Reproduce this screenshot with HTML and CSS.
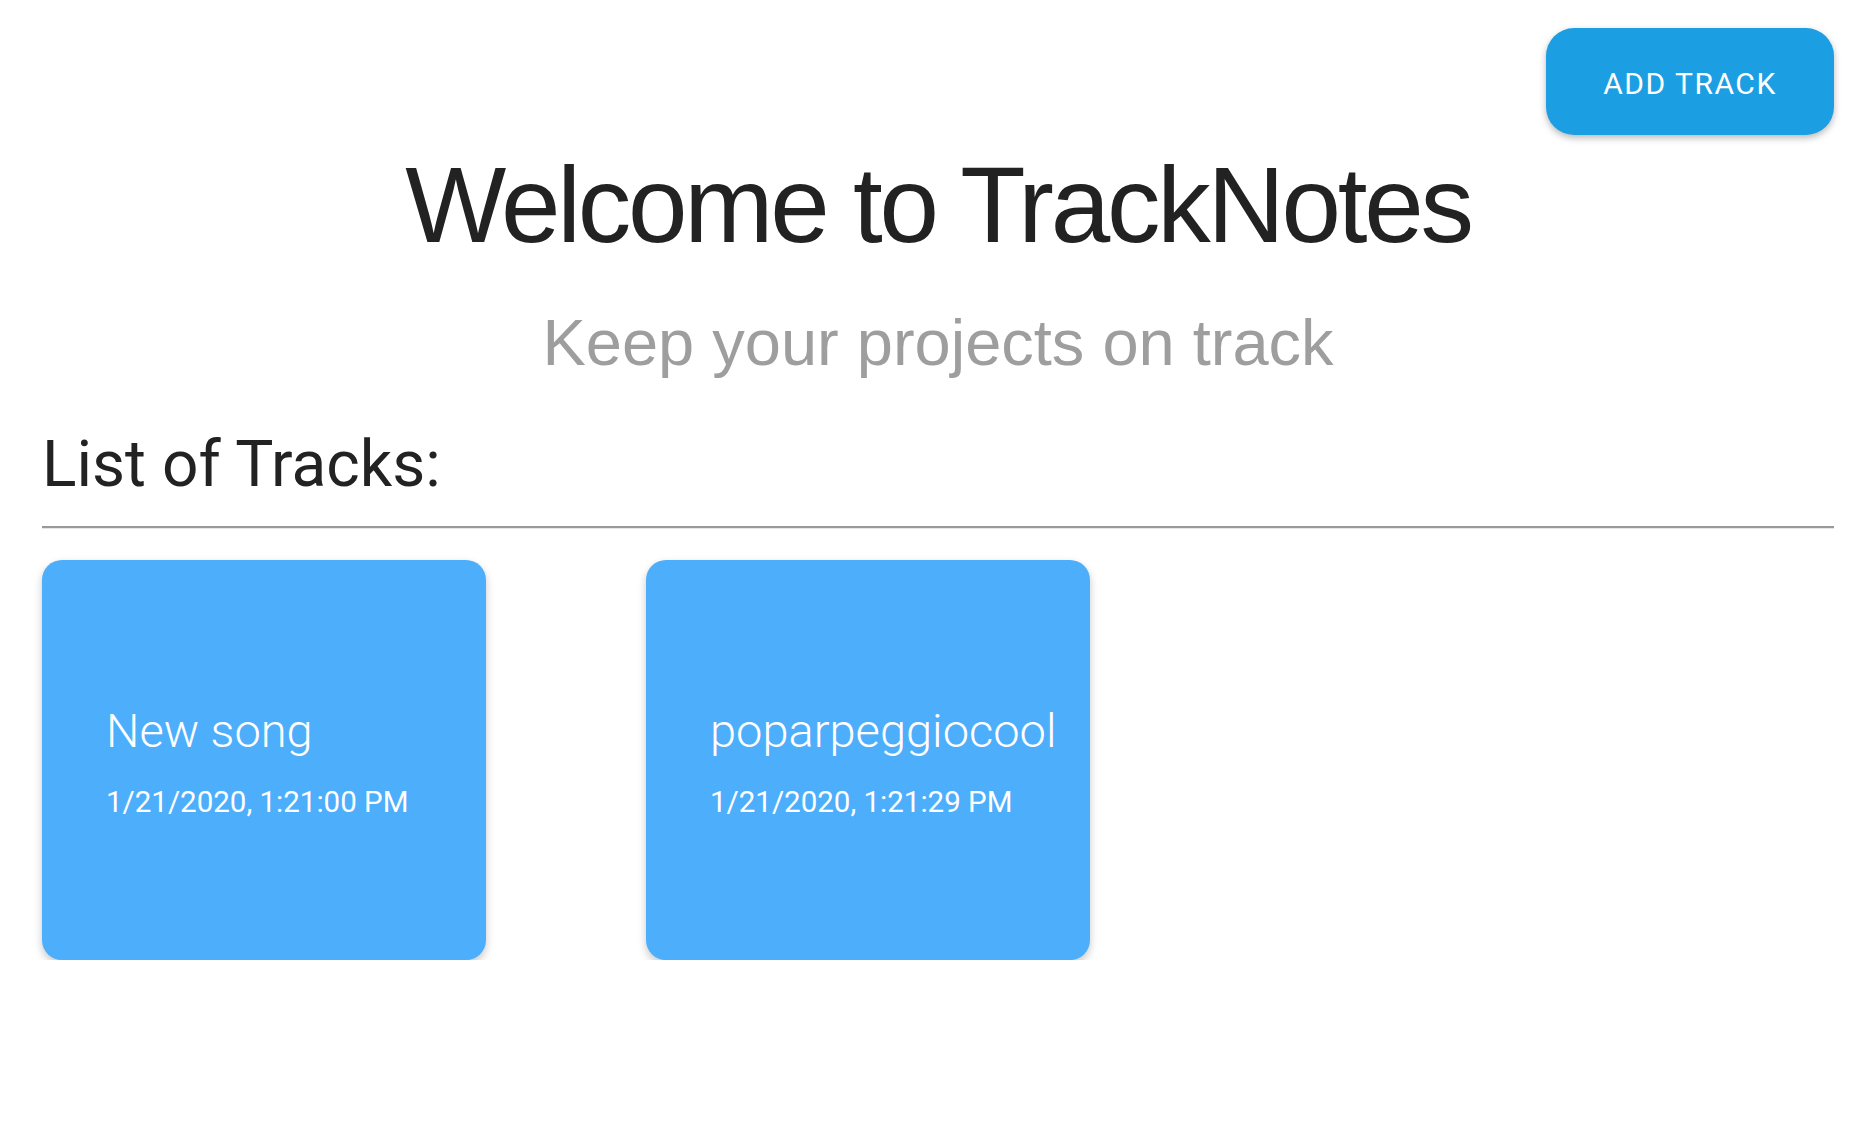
FILE: index.html
```html
<!DOCTYPE html>
<html lang="en">
<head>
<meta charset="utf-8">
<title>TrackNotes</title>
<link rel="stylesheet" href="styles.css">
</head>
<body>
<div class="page">
  <div class="topbar">
    <button class="add-btn">ADD TRACK</button>
  </div>
  <h1 class="title">Welcome to TrackNotes</h1>
  <p class="subtitle">Keep your projects on track</p>
  <h2 class="list-heading">List of Tracks:</h2>
  <hr class="divider">
  <div class="cards">
    <div class="card">
      <div class="card-title">New song</div>
      <div class="card-date">1/21/2020, 1:21:00 PM</div>
    </div>
    <div class="card">
      <div class="card-title">poparpeggiocool</div>
      <div class="card-date">1/21/2020, 1:21:29 PM</div>
    </div>
  </div>
</div>
</body>
</html>
```

FILE: styles.css
```css
html, body {
  margin: 0;
  padding: 0;
  background: #ffffff;
}

.page {
  padding: 0 36px 0 42px;
  font-family: Roboto, "Liberation Sans", sans-serif;
  color: #222222;
}

.topbar {
  display: flex;
  justify-content: flex-end;
  padding-top: 28px;
}

.add-btn {
  width: 288px;
  height: 107px;
  border: none;
  border-radius: 28px;
  background: #1c9ee2;
  color: #ffffff;
  font-family: Roboto, "Liberation Sans", sans-serif;
  font-size: 30px;
  font-weight: 400;
  letter-spacing: 1.5px;
  box-shadow: 0 3px 7px rgba(0, 0, 0, 0.28);
  cursor: pointer;
  padding: 4px 0 0 0;
}

.title {
  margin: 9px 0 0 0;
  text-align: center;
  font-family: "Liberation Sans", Arial, sans-serif;
  font-size: 107px;
  font-weight: 400;
  line-height: 1.15;
  letter-spacing: -3.25px;
  color: #222222;
}

.subtitle {
  margin: 39px 0 0 0;
  text-align: center;
  font-family: "Liberation Sans", Arial, sans-serif;
  font-size: 65px;
  line-height: 1.15;
  color: #9e9e9e;
}

.list-heading {
  margin: 46px 0 0 0;
  font-family: Roboto, sans-serif;
  font-size: 64px;
  font-weight: 400;
  line-height: 1.2;
  color: #222222;
}

.divider {
  margin: 22px 0 0 0;
  border: none;
  border-top: 2px solid #9a9a9a;
  border-bottom: 1px solid #e6e6e6;
  height: 0;
}

.cards {
  display: flex;
  gap: 160px;
  margin-top: 31px;
}

.card {
  width: 444px;
  height: 400px;
  box-sizing: border-box;
  border-radius: 20px;
  background: #4daefb;
  box-shadow: 0 4px 8px rgba(0, 0, 0, 0.22);
  display: flex;
  flex-direction: column;
  justify-content: center;
  padding: 4px 0 0 64px;
  color: #ffffff;
}

.card-title {
  font-family: Roboto, sans-serif;
  font-size: 47px;
  font-weight: 300;
  line-height: 1.2;
  margin-bottom: 25px;
}

.card-date {
  font-family: Roboto, sans-serif;
  font-size: 29.5px;
  font-weight: 400;
  line-height: 1.2;
}
```
